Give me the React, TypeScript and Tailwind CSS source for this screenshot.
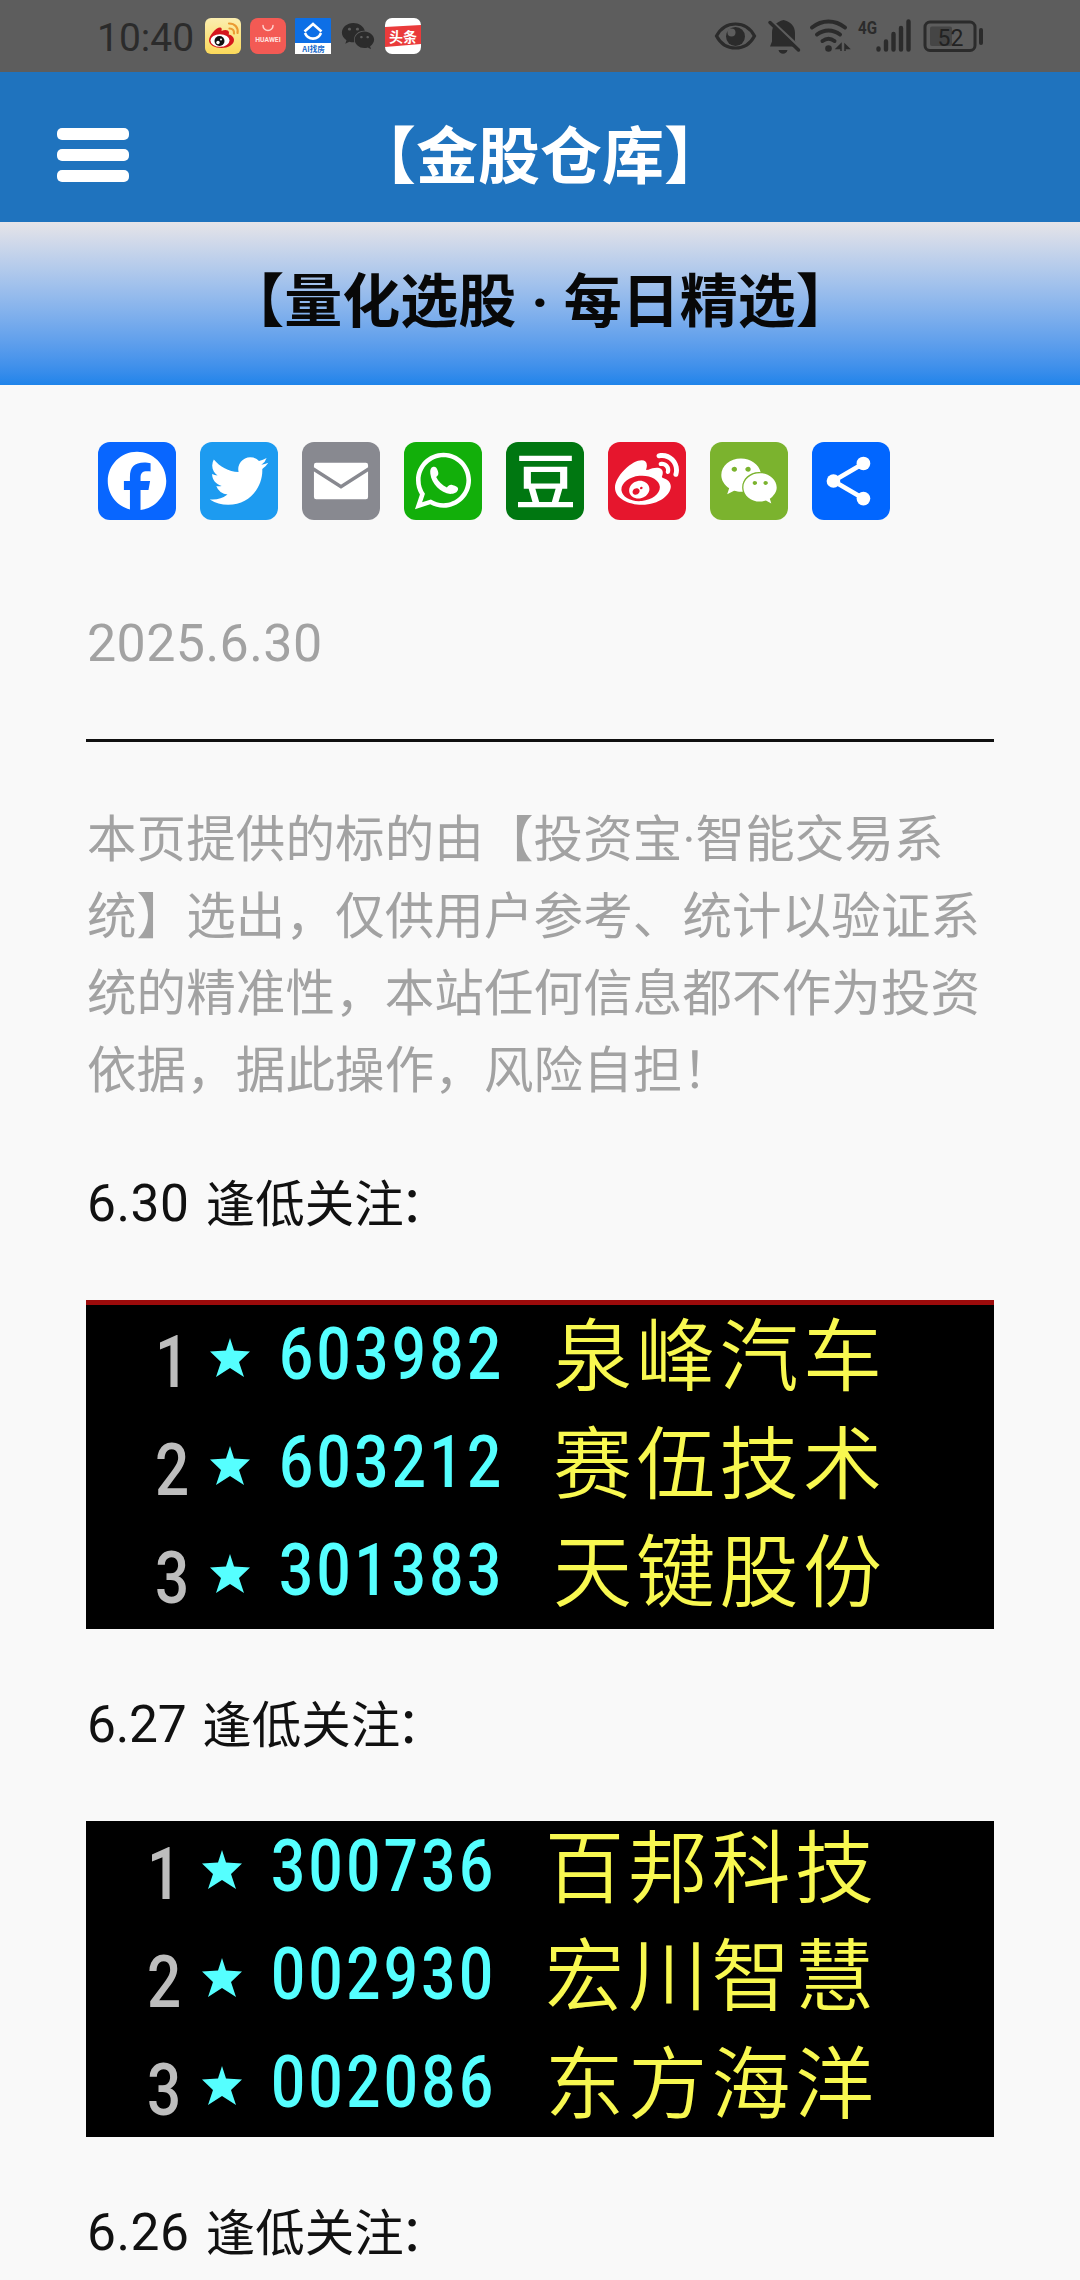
import type { ReactNode } from 'react';
import { FaWeibo, FaWeixin } from 'react-icons/fa';
import { SiDouban } from 'react-icons/si';

const LATIN = "font-[Roboto,'Noto_Sans_CJK_SC',sans-serif]";
const CJK = "font-['Noto_Sans_CJK_SC',sans-serif]";

type Stock = { code: string; name: string };

const JUNE_30: Stock[] = [
  { code: '603982', name: '泉峰汽车' },
  { code: '603212', name: '赛伍技术' },
  { code: '301383', name: '天键股份' },
];

const JUNE_27: Stock[] = [
  { code: '300736', name: '百邦科技' },
  { code: '002930', name: '宏川智慧' },
  { code: '002086', name: '东方海洋' },
];

/** Phone status bar: clock, running apps, system indicators */
function StatusBar() {
  return (
    <div className="flex h-[72px] items-center justify-between bg-[#5d5d5d] pl-[97px] pr-[97px] text-[#2b2b2b]">
      <div className="flex items-center">
        <span className={`${LATIN} w-[108px] pt-1 text-[39px] leading-none`}>10:40</span>
        <div className="flex gap-[9px]">
          {/* Weibo */}
          <svg className="size-9" viewBox="0 0 36 36">
            <defs>
              <linearGradient id="weibo-bg" x1="0" y1="0" x2="0" y2="1">
                <stop offset="0" stopColor="#fbeeb0" />
                <stop offset="1" stopColor="#fbd95a" />
              </linearGradient>
            </defs>
            <rect width="36" height="36" rx="6" fill="url(#weibo-bg)" />
            <path
              d="M15 9.5c1.800 0 2 1.500 1.500 3.500 3-1.300 7-1.500 7.500 1.500 0 1-.3 1.500-.3 2 2.300.6 5.300 2 5.300 5.500 0 4.500-6 8-12.500 8S4 27 4 22.500C4 17.500 11 9.500 15 9.500z"
              fill="#d5161d"
            />
            <ellipse cx="15" cy="22.500" rx="9.500" ry="6.300" fill="#fff" />
            <circle cx="14.500" cy="23" r="5" fill="#111" />
            <circle cx="13" cy="24.500" r="1.700" fill="#fff" />
            <circle cx="16" cy="21.500" r="1" fill="#fff" />
            <path d="M24.500 10.500c3 0 5 2 4.500 5M24 5.500c6 0 9.500 4 8.500 9.500" stroke="#eb9a33" strokeWidth="2.200" fill="none" strokeLinecap="round" />
          </svg>
          {/* Huawei AppGallery */}
          <svg className="size-9" viewBox="0 0 36 36">
            <rect width="36" height="36" rx="8" fill="#f35a54" />
            <path d="M13 7.500a5 5 0 0 0 10 0" stroke="#ffd0cc" strokeWidth="1.500" fill="none" strokeLinecap="round" />
            <text x="18" y="24" textAnchor="middle" fontFamily="Roboto" fontSize="6.800" fontWeight="700" fill="#ffe3e0">
              HUAWEI
            </text>
          </svg>
          {/* AI search */}
          <svg className="size-9" viewBox="0 0 36 36">
            <rect width="36" height="36" rx="1" fill="#0d6fe6" />
            <path d="M0 25h36v11H0z" fill="#fff" />
            <path d="M9.500 13.500 18 6l8.500 7.500M10 15c3 7.500 13 7.500 16 0" stroke="#fff" strokeWidth="2.600" fill="none" />
            <text x="18.500" y="34" textAnchor="middle" fontFamily="Noto Sans CJK SC" fontSize="7.500" fontWeight="700" fill="#1669c9">
              AI找房
            </text>
          </svg>
          {/* WeChat */}
          <span className="flex size-9 items-center justify-center">
            <FaWeixin className="h-[30px] w-[34px]" />
          </span>
          {/* Toutiao */}
          <svg className="size-9" viewBox="0 0 36 36">
            <rect width="36" height="36" rx="7" fill="#fff" />
            <path d="M0 9 36 7v19L0 29z" fill="#ea3b3b" />
            <text x="18" y="23.500" textAnchor="middle" fontFamily="Noto Sans CJK SC" fontSize="14" fontWeight="700" fill="#fff">
              头条
            </text>
          </svg>
        </div>
      </div>

      <svg className="h-10 w-[270px]" viewBox="713 16 270 40" fill="none" stroke="#2b2b2b">
        {/* Eye comfort */}
        <path d="M716.500 36c8.500-16 29.500-16 38 0-8.500 16-29.500 16-38 0z" strokeWidth="3.200" />
        <circle cx="735.500" cy="36.500" r="9.500" fill="#2b2b2b" stroke="none" />
        <circle cx="731.500" cy="32.500" r="4" fill="#5d5d5d" stroke="none" />
        {/* Muted bell */}
        <path d="M770 46.500l2-5V33c0-7 4-11 11.500-13 7 1.500 11.500 6 11.500 13v8l3 5.500z" fill="#2b2b2b" stroke="none" />
        <path d="M778.500 50h9c-1 5-8 5-9 0z" fill="#2b2b2b" stroke="none" />
        <path d="M773 22.500l29 27" stroke="#5d5d5d" strokeWidth="3" />
        <path d="M770 22.500l28.500 27.500" strokeWidth="3.500" strokeLinecap="round" />
        {/* Wifi */}
        <path d="M812 27.500c10-8 23-8 33 0M817 34.500c7-5.500 16-5.500 23 0M822.500 41c4-3 8-3 12 0" strokeWidth="4" strokeLinecap="round" />
        <circle cx="828.500" cy="48.500" r="3.300" fill="#2b2b2b" stroke="none" />
        <path d="M841 44v7M836.500 48.500l4.500-4.500v4.500zM845 44v7M845 44.500l4 4-4 0z" fill="#2b2b2b" strokeWidth="1.500" />
        {/* Mobile signal */}
        <text x="858" y="34" fontFamily="Roboto" fontSize="19" fontWeight="700" textLength="19" lengthAdjust="spacingAndGlyphs" fill="#2b2b2b" stroke="none">
          4G
        </text>
        <path d="M878.500 48.500v1M886 41.500v8M893.500 34v15.500M901 28v21.500M908.500 21.500v28" strokeWidth="4.400" strokeLinecap="round" />
        {/* Battery */}
        <rect x="925" y="22" width="50" height="28.500" rx="5" strokeWidth="3" />
        <rect x="930" y="26.500" width="22" height="19.500" rx="2" fill="#454545" stroke="none" />
        <path d="M981 30v13" strokeWidth="4" strokeLinecap="round" />
        <text x="950.500" y="46" textAnchor="middle" fontFamily="Roboto" fontSize="23" fill="#222" stroke="none">
          52
        </text>
      </svg>
    </div>
  );
}

/** Blue site header with menu button */
function Header() {
  return (
    <header className="grid h-[150px] grid-cols-[129px_1fr_129px] items-center bg-[#1f73be]">
      <button className="mt-[15px] ml-[57px] flex flex-col gap-[9px]" aria-label="menu">
        <span className="h-3 w-[72px] rounded-[5px] bg-white" />
        <span className="h-3 w-[72px] rounded-[5px] bg-white" />
        <span className="h-3 w-[72px] rounded-[5px] bg-white" />
      </button>
      <h1 className={`${CJK} pt-2.5 text-center text-[62px] leading-none font-bold whitespace-nowrap text-white`}>【金股仓库】</h1>
    </header>
  );
}

function Tile({ color, children }: { color: string; children: ReactNode }) {
  return <span className={`flex size-[78px] items-center justify-center rounded-xl text-white ${color}`}>{children}</span>;
}

/** Row of share buttons */
function ShareRow() {
  return (
    <div className="flex gap-6 pl-3">
      <Tile color="bg-[#0866ff]">
        <svg className="size-full" viewBox="0 0 32 32" fill="currentColor">
          <path d="M28 16c0-6.627-5.373-12-12-12S4 9.373 4 16c0 5.628 3.875 10.350 9.101 11.647v-7.980h-2.474V16H13.100v-1.580c0-4.085 1.849-5.978 5.859-5.978.76 0 2.072.15 2.608.298v3.325c-.283-.03-.775-.045-1.386-.045-1.967 0-2.728.745-2.728 2.683V16h3.920l-.673 3.667h-3.247v8.245C23.395 27.195 28 22.135 28 16" />
        </svg>
      </Tile>
      <Tile color="bg-[#1d9bf0]">
        <svg className="size-full" viewBox="0 0 32 32" fill="currentColor">
          <path d="M28 8.557a10 10 0 0 1-2.828.775 4.930 4.930 0 0 0 2.166-2.725 9.700 9.700 0 0 1-3.130 1.194 4.920 4.920 0 0 0-3.593-1.550 4.924 4.924 0 0 0-4.794 6.049c-4.090-.21-7.720-2.170-10.150-5.150a4.940 4.940 0 0 0-.665 2.477c0 1.710.87 3.214 2.190 4.100a5 5 0 0 1-2.230-.616v.06c0 2.390 1.700 4.380 3.952 4.830-.414.115-.85.174-1.297.174q-.476-.001-.928-.086a4.935 4.935 0 0 0 4.600 3.420 9.900 9.900 0 0 1-6.114 2.107q-.597 0-1.175-.068a13.950 13.950 0 0 0 7.550 2.213c9.056 0 14.010-7.507 14.010-14.013q0-.32-.015-.637c.96-.695 1.795-1.560 2.455-2.550z" />
        </svg>
      </Tile>
      <Tile color="bg-[#888990]">
        <svg className="size-full" viewBox="0 0 32 32">
          <rect x="4.900" y="8.500" width="22.200" height="15" rx="0.900" fill="currentColor" />
          <path d="M4.500 11 16 18.300 27.500 11" fill="none" stroke="#888990" strokeWidth="1.400" />
        </svg>
      </Tile>
      <Tile color="bg-[#12af0a]">
        <svg className="size-full" viewBox="0 0 32 32" fill="currentColor">
          <path
            fillRule="evenodd"
            d="M16.210 4.410C9.973 4.410 4.917 9.465 4.917 15.700c0 2.134.592 4.130 1.620 5.832L4.500 27.590l6.250-2.002a11.240 11.240 0 0 0 5.460 1.404c6.234 0 11.290-5.055 11.290-11.290 0-6.237-5.056-11.292-11.290-11.292m0 20.690c-1.910 0-3.690-.57-5.173-1.553l-3.610 1.156 1.173-3.490a9.350 9.350 0 0 1-1.790-5.512c0-5.180 4.217-9.400 9.400-9.400s9.397 4.220 9.397 9.400c0 5.188-4.214 9.400-9.398 9.400z"
          />
          <path d="M12 10.200c.9-.2 1.500.4 1.900 1.700.4 1.200.2 1.700-.7 2.500.9 1.900 2.400 3.300 4.400 4.300.7-.9 1.200-1.300 2.200-1.100 1.600.4 2.500.9 2.400 1.700-.2 1.500-1.700 2-3.200 2C15 20.900 11.300 17 10.800 13c-.2-1.500.2-2.500 1.200-2.800z" />
        </svg>
      </Tile>
      <Tile color="bg-[#071]">
        <SiDouban className="size-[55px]" />
      </Tile>
      <Tile color="bg-[#e6162d]">
        <FaWeibo className="size-[64px]" />
      </Tile>
      <Tile color="bg-[#7bb32e]">
        <FaWeixin className="h-[52px] w-[58px]" />
      </Tile>
      <Tile color="bg-[#0166ff]">
        <svg className="size-full" viewBox="0 0 32 32" fill="currentColor">
          <path d="M21.100 8.800 8.800 16l12.300 7.200" fill="none" stroke="currentColor" strokeWidth="1.900" />
          <circle cx="8.800" cy="16" r="2.800" />
          <circle cx="21.100" cy="8.800" r="2.800" />
          <circle cx="21.100" cy="23.200" r="2.800" />
        </svg>
      </Tile>
    </div>
  );
}

function DayHeading({ date, tracking = 'tracking-[0.5px]' }: { date: string; tracking?: string }) {
  return (
    <h2 className="flex h-[76px] items-center pl-px text-[#111] whitespace-pre">
      <span className={`${LATIN} ${tracking} text-[51.500px] leading-[76px]`}>{date} </span>
      <span className={`${CJK} ml-[3px] pb-1.5 text-[49.500px] leading-[70px]`}>
        逢低关注<span className="-ml-1">：</span>
      </span>
    </h2>
  );
}

/** Black terminal-style stock list */
function StockBoard({ stocks, className, rowClass }: { stocks: Stock[]; className: string; rowClass: string }) {
  return (
    <div className={`overflow-hidden bg-black ${className}`}>
      {stocks.map((s, i) => (
        <div key={s.code} className={`flex h-[108px] items-center ${rowClass}`}>
          <span className={`${LATIN} w-[55px] origin-left scale-x-[0.835] pt-4 text-[72px] leading-none font-medium text-[#bdbdbd]`}>{i + 1}</span>
          <svg className="mt-1 h-[39px] w-10" viewBox="0 0 40 39" fill="#55ffff">
            <path d="M20 0l4 12.500 16 1-11 10.500 5 15-14-9-14 9 5-15L0 13.500l16-1z" />
          </svg>
          <span className={`${LATIN} ml-[29px] w-[274px] origin-left scale-x-[0.835] text-[72px] leading-none font-medium tracking-[4.100px] text-[#55ffff]`}>
            {s.code}
          </span>
          <span className={`${CJK} pb-2.5 text-[79px] leading-none font-[350] tracking-[4.300px] whitespace-nowrap text-[#f8f850]`}>{s.name}</span>
        </div>
      ))}
    </div>
  );
}

export default function App() {
  return (
    <div className="h-[2280px] w-[1080px] overflow-hidden bg-[#f9f9f9]" lang="zh-CN">
      <StatusBar />
      <Header />

      <div className="flex h-[163px] items-center justify-center bg-linear-to-b from-[#e6e4e8] to-[#1f84ea]">
        <h2 className={`${CJK} pb-2 text-[58px] leading-none font-bold whitespace-nowrap text-[#080808]`}>
          【量化选股<span className="px-[15px] font-[Roboto,sans-serif]">·</span>每日精选】
        </h2>
      </div>

      <main className="px-[86px] pt-[57px]">
        <ShareRow />

        <p className={`${LATIN} mt-[86px] pl-px text-[52px] leading-[76px] tracking-[0.400px] text-[#a2a2a2]`}>2025.6.30</p>
        <hr className="mt-[57px] border-t-[3px] border-[#111]" />

        <p className={`${CJK} mt-[55px] pl-px text-[49.500px] leading-[77px] tracking-[0.120px] whitespace-nowrap text-[#a2a2a2]`}>
          本页提供的标的由【投资宝<span className="font-[Roboto,sans-serif] leading-none">·</span>智能交易系
          <br />
          统】选出，仅供用户参考、统计以验证系
          <br />
          统的精准性，本站任何信息都不作为投资
          <br />
          依据，据此操作，风险自担！
        </p>

        <div className="mt-[61px]">
          <DayHeading date="6.30" />
        </div>
        <StockBoard stocks={JUNE_30} className="mt-[58px] h-[329px] border-t-[5px] border-[#9c0b0b]" rowClass="relative -top-1 pl-[69px]" />

        <div className="mt-[58px]">
          <DayHeading date="6.27" tracking="tracking-[-0.200px]" />
        </div>
        <StockBoard stocks={JUNE_27} className="mt-[58px] h-[316px]" rowClass="relative -top-2 pl-[61px]" />

        <div className="mt-[58px]">
          <DayHeading date="6.26" />
        </div>
      </main>
    </div>
  );
}
